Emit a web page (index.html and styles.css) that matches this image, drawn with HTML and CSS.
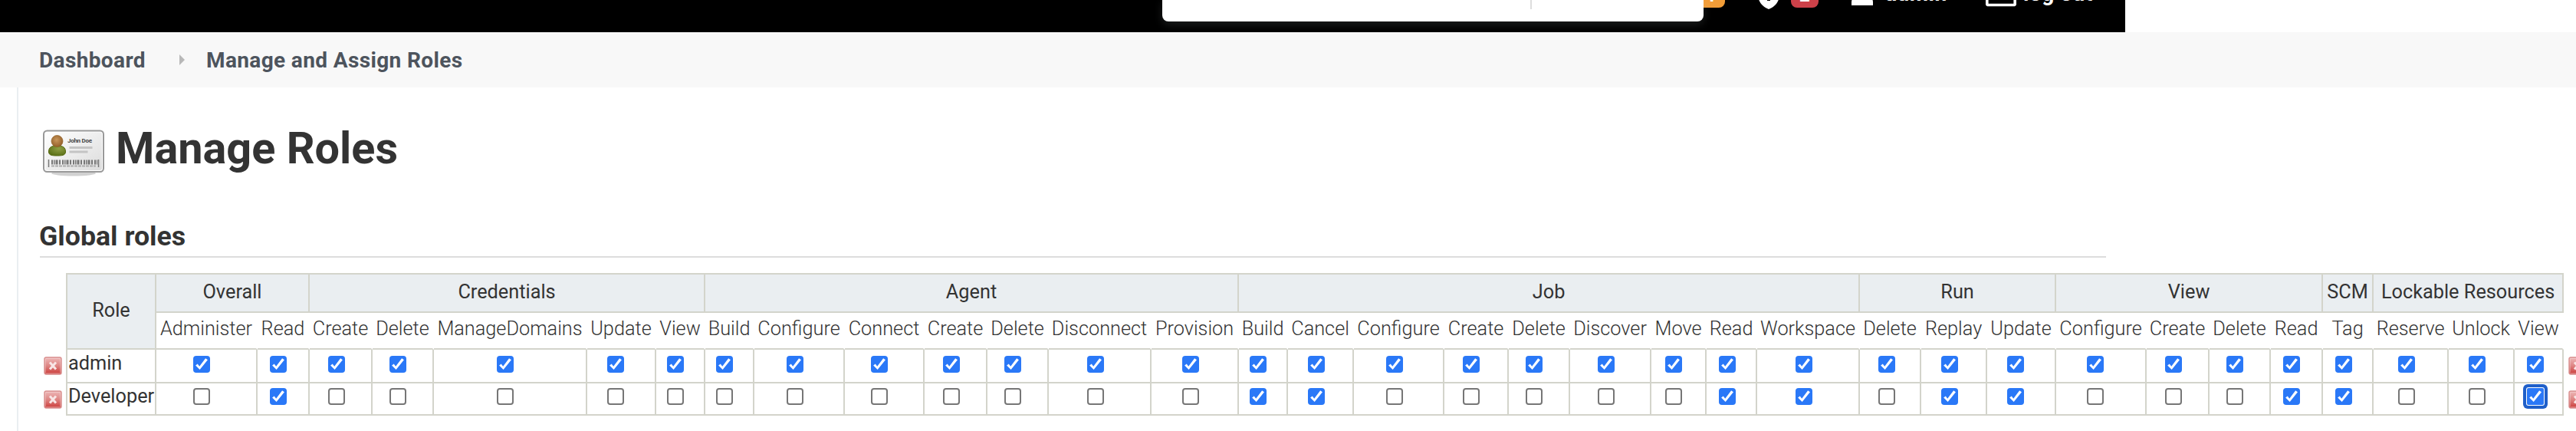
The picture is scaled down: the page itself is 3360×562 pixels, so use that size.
FILE: index.html
```html
<!DOCTYPE html>
<html lang="en">
<head>
<meta charset="utf-8">
<title>Manage Roles</title>
<link rel="stylesheet" href="styles.css">
</head>
<body>
<svg class="defs" width="0" height="0">
  <defs>
    <linearGradient id="red" x1="0" y1="0" x2="0" y2="1"><stop offset="0" stop-color="#eeb9b9"/><stop offset=".5" stop-color="#de8583"/><stop offset="1" stop-color="#cb3a38"/></linearGradient>
    <symbol id="remove" viewBox="0 0 24 24">
      <rect x="1" y="1" width="22" height="22" rx="2" fill="url(#red)" stroke="#d98f8e" stroke-width="1.4"/>
      <rect x="2.4" y="2.4" width="19.2" height="19.2" rx="1" fill="none" stroke="#fff" stroke-opacity=".3"/>
      <path d="M8 7.500l8 9M16 7.500l-8 9" stroke="#f8e6e6" stroke-width="3"/>
    </symbol>
  </defs>
</svg>
<header class="top">
  <div class="search"><i></i></div>
  <span class="badge orange">1</span>
  <svg class="shield" width="28" height="36" viewBox="0 0 28 36"><path d="M14 0L28 6V17C28 26 22 33 14 36C6 33 0 26 0 17V6Z" fill="#fff"/><path d="M14 12v13" stroke="#000" stroke-width="4"/></svg>
  <span class="badge red">2</span>
  <svg class="person" width="28" height="28" viewBox="0 0 28 28"><circle cx="14" cy="7" r="7" fill="#fff"/><path d="M0 28V24C0 17 6 14 14 14S28 17 28 24V28Z" fill="#fff"/></svg>
  <b class="user">admin</b>
  <svg class="exit" width="40" height="36" viewBox="0 0 40 36"><rect x="1.750" y="2" width="36.500" height="30.500" rx="2" fill="none" stroke="#fff" stroke-width="3.700"/></svg>
  <b class="logout">log out</b>
</header>
<nav class="crumbs">
  <a class="home">Dashboard</a>
  <svg width="7" height="14" viewBox="0 0 7 14"><path d="M0 0L7 7L0 14Z" fill="#b8b8b8"/></svg>
  <a>Manage and Assign Roles</a>
</nav>
<main class="main">
  <h1>
    <svg width="84" height="64" viewBox="0 0 84 64">
      <defs>
        <linearGradient id="card" x1="0" y1="0" x2="1" y2="1"><stop offset="0" stop-color="#fff"/><stop offset="1" stop-color="#dcdcdc"/></linearGradient>
        <radialGradient id="head" cx=".45" cy=".4" r=".6"><stop offset="0" stop-color="#c8965a"/><stop offset="1" stop-color="#95602a"/></radialGradient>
        <radialGradient id="coat" cx=".6" cy=".3" r=".7"><stop offset="0" stop-color="#909f45"/><stop offset="1" stop-color="#5c7218"/></radialGradient>
      </defs>
      <ellipse cx="42" cy="57" rx="29" ry="3.500" fill="#000" opacity=".18"/>
      <rect x="3" y="1.500" width="78" height="53.500" rx="4.500" fill="#fff" stroke="#999" stroke-width="2"/>
      <rect x="5" y="3.500" width="74" height="49.500" rx="3" fill="url(#card)"/>
      <path d="M9.500 29C9.500 23 13 21 20.500 21S31.500 23 31.500 29C31.500 33.500 27 34 20.500 34S9.500 33.500 9.500 29Z" fill="url(#coat)" stroke="#56690f"/>
      <circle cx="20.500" cy="15" r="7.500" fill="url(#head)" stroke="#8f5f22" stroke-width=".7"/>
      <text x="34" y="16.500" class="card-name" textLength="32">John Doe</text>
      <path d="M36.500 23.500H66.500M36.500 29H60.500" stroke="#c4c4c4" stroke-width="3"/>
      <path d="M9.500 39V49M74.500 39V49" stroke="#777" stroke-width="1.500"/>
      <path d="M13 42.500H73" stroke="#777" stroke-width="6" stroke-dasharray="2 1 1.500 1 3 1.500 2 2"/>
      <path d="M13 47.500H71" stroke="#aaa" stroke-width="1.800" stroke-dasharray="4 1"/>
    </svg>
    <span>Manage Roles</span>
  </h1>
  <h2><span>Global roles</span></h2>
  <table class="roles">
    <colgroup>
      <col style="width:34px"><col style="width:118px"><col style="width:132px"><col style="width:68px">
      <col style="width:82px"><col style="width:80px"><col style="width:200px"><col style="width:90px"><col style="width:64px">
      <col style="width:64px"><col style="width:118px"><col style="width:104px"><col style="width:82px"><col style="width:80px"><col style="width:134px"><col style="width:114px">
      <col style="width:64px"><col style="width:86px"><col style="width:118px"><col style="width:84px"><col style="width:80px"><col style="width:106px"><col style="width:72px"><col style="width:66px"><col style="width:134px">
      <col style="width:80px"><col style="width:86px"><col style="width:90px">
      <col style="width:118px"><col style="width:82px"><col style="width:80px"><col style="width:68px">
      <col style="width:66px">
      <col style="width:98px"><col style="width:86px"><col style="width:64px"><col style="width:36px">
    </colgroup>
    <tr class="groups">
      <td class="bare" rowspan="2"></td><th class="role" rowspan="2">Role</th><th colspan="2">Overall</th><th colspan="5">Credentials</th><th colspan="7">Agent</th><th colspan="9">Job</th><th colspan="3">Run</th><th colspan="4">View</th><th>SCM</th><th colspan="3">Lockable Resources</th><td class="bare" rowspan="2"></td>
    </tr>
    <tr class="perms">
      <td>Administer</td><td>Read</td>
      <td>Create</td><td>Delete</td><td>ManageDomains</td><td>Update</td><td>View</td>
      <td>Build</td><td>Configure</td><td>Connect</td><td>Create</td><td>Delete</td><td>Disconnect</td><td>Provision</td>
      <td>Build</td><td>Cancel</td><td>Configure</td><td>Create</td><td>Delete</td><td>Discover</td><td>Move</td><td>Read</td><td>Workspace</td>
      <td>Delete</td><td>Replay</td><td>Update</td>
      <td>Configure</td><td>Create</td><td>Delete</td><td>Read</td>
      <td>Tag</td>
      <td>Reserve</td><td>Unlock</td><td>View</td>
    </tr>
    <tr class="grants first">
      <td class="bare"><svg width="24" height="24"><use href="#remove"/></svg></td><td class="name">admin</td>
      <td><input type="checkbox" checked></td><td><input type="checkbox" checked></td>
      <td><input type="checkbox" checked></td><td><input type="checkbox" checked></td><td><input type="checkbox" checked></td><td><input type="checkbox" checked></td><td><input type="checkbox" checked></td>
      <td><input type="checkbox" checked></td><td><input type="checkbox" checked></td><td><input type="checkbox" checked></td><td><input type="checkbox" checked></td><td><input type="checkbox" checked></td><td><input type="checkbox" checked></td><td><input type="checkbox" checked></td>
      <td><input type="checkbox" checked></td><td><input type="checkbox" checked></td><td><input type="checkbox" checked></td><td><input type="checkbox" checked></td><td><input type="checkbox" checked></td><td><input type="checkbox" checked></td><td><input type="checkbox" checked></td><td><input type="checkbox" checked></td><td><input type="checkbox" checked></td>
      <td><input type="checkbox" checked></td><td><input type="checkbox" checked></td><td><input type="checkbox" checked></td>
      <td><input type="checkbox" checked></td><td><input type="checkbox" checked></td><td><input type="checkbox" checked></td><td><input type="checkbox" checked></td>
      <td><input type="checkbox" checked></td>
      <td><input type="checkbox" checked></td><td><input type="checkbox" checked></td><td><input type="checkbox" checked></td>
      <td class="bare end"><svg width="24" height="24"><use href="#remove"/></svg></td>
    </tr>
    <tr class="grants second">
      <td class="bare"><svg width="24" height="24"><use href="#remove"/></svg></td><td class="name">Developer</td>
      <td><input type="checkbox"></td><td><input type="checkbox" checked></td>
      <td><input type="checkbox"></td><td><input type="checkbox"></td><td><input type="checkbox"></td><td><input type="checkbox"></td><td><input type="checkbox"></td>
      <td><input type="checkbox"></td><td><input type="checkbox"></td><td><input type="checkbox"></td><td><input type="checkbox"></td><td><input type="checkbox"></td><td><input type="checkbox"></td><td><input type="checkbox"></td>
      <td><input type="checkbox" checked></td><td><input type="checkbox" checked></td><td><input type="checkbox"></td><td><input type="checkbox"></td><td><input type="checkbox"></td><td><input type="checkbox"></td><td><input type="checkbox"></td><td><input type="checkbox" checked></td><td><input type="checkbox" checked></td>
      <td><input type="checkbox"></td><td><input type="checkbox" checked></td><td><input type="checkbox" checked></td>
      <td><input type="checkbox"></td><td><input type="checkbox"></td><td><input type="checkbox"></td><td><input type="checkbox" checked></td>
      <td><input type="checkbox" checked></td>
      <td><input type="checkbox"></td><td><input type="checkbox"></td><td><input type="checkbox" class="focused" checked></td>
      <td class="bare end"><svg width="24" height="24"><use href="#remove"/></svg></td>
    </tr>
  </table>
</main>
</body>
</html>
```
FILE: styles.css
```css
* { box-sizing: border-box; }
html { height: 562px; overflow: hidden; }
body { margin: 0; height: 562px; overflow: hidden; background: #fff; color: #333; font-family: Roboto, sans-serif; }
.defs { position: absolute; }

.top { display: flex; align-items: flex-start; width: 2772px; height: 42px; padding-left: 1516px; background: #000; color: #fff; overflow: hidden; }
.search { width: 706px; height: 28px; flex: none; background: #fff; border-radius: 0 0 8px 8px; padding-left: 480px; box-shadow: 0 4px 12px rgba(200, 215, 210, .14); z-index: 1; }
.search i { display: block; width: 2px; height: 12px; background: #ddd; }
.badge { flex: none; width: 36px; height: 32px; margin-top: -22px; border-radius: 8px; font-size: 24px; line-height: 32px; font-weight: 700; text-align: center; }
.orange { background: #f29d38; margin-left: -8px; }
.red { background: #cc4149; margin-left: 15px; }
.shield { flex: none; margin: -24px 0 0 43px; }
.person { flex: none; margin: -21px 0 0 43px; }
.user, .logout { flex: none; font-size: 28px; letter-spacing: .5px; line-height: 30px; margin-top: -23px; }
.user { width: 131px; margin-left: 16px; }
.exit { flex: none; margin-top: -26px; }
.logout { margin-left: 9px; white-space: nowrap; }

.crumbs { display: flex; align-items: center; height: 72px; padding-left: 51px; background: #f8f8f8; color: #4d545d; font-size: 28px; font-weight: 700; letter-spacing: .37px; }
.crumbs .home { width: 183px; }
.crumbs svg { margin-right: 28px; }

.main { height: 448px; margin-left: 22px; padding-left: 28px; border-left: 2px solid #eaeef1; }
h1 { display: flex; align-items: flex-start; height: 150px; margin: 0; padding-top: 55px; font-size: 57.600px; line-height: 50px; }
h1 svg { margin: 0 13px 0 2px; }
.card-name { font: 700 8px Roboto, sans-serif; fill: #444; }
h2 { width: 2695px; height: 72px; margin: 0 0 20px 0; padding-top: 26px; border-bottom: 2px solid #ddd; font-size: 35.700px; line-height: 36px; }
h2 span { margin-left: -1px; }

.roles { table-layout: fixed; width: 3326px; border-collapse: separate; border-spacing: 0; font-size: 25.300px; white-space: nowrap; }
.roles td, .roles th { padding: 0; border: 0 solid #d3d4cb; border-width: 0 2px 2px 0; text-align: center; vertical-align: top; }
.roles .bare { border: 0; }
.roles th { background: #eaeef1; border-top-width: 2px; font-weight: 400; line-height: 46px; height: 52px; }
.roles .role { border-left: 2px solid #d3d4cb; line-height: 94px; }
.roles .perms td { height: 48px; line-height: 41px; font-weight: 300; border-right-color: transparent; }
.roles .name { border-left: 2px solid #d3d4cb; text-align: left; padding-left: 1px; line-height: 36px; }
.roles .first td { height: 44px; }
.roles .second td { height: 42px; }
.roles .second .name { line-height: 34px; }
.roles .grants .bare { padding: 9px 0 0 5px; text-align: left; }
.roles .grants .end { padding-left: 6px; }
.grants svg { display: block; }

input { appearance: none; display: block; width: 22px; height: 22px; margin: 8px auto 0; border: 2px solid #767676; border-radius: 4px; background: #fff; transform: translateX(-6px); }
.second input { margin-top: 6px; }
input:checked { border: 0; background: #2a78f7; }
input:checked::after { content: ""; display: block; width: 22px; height: 22px; background: #fff; clip-path: polygon(14% 57%, 26% 48%, 37% 63%, 73% 15%, 86% 24%, 39% 82%); }
.grants td:nth-child(26) input, .grants td:nth-child(36) input { transform: translateX(-4px); }
.grants td:is(:nth-child(5), :nth-child(11), :nth-child(13), :nth-child(15), :nth-child(16), :nth-child(18), :nth-child(19), :nth-child(22), :nth-child(24), :nth-child(25), :nth-child(27), :nth-child(30), :nth-child(33), :nth-child(34), :nth-child(35)) input { transform: translateX(-5px); }
.grants td:is(:nth-child(8), :nth-child(28), :nth-child(29)) input { transform: translateX(-7px); }
input.focused { box-shadow: 0 0 0 1px #fff, 0 0 0 5px #1f5fc9; border-radius: 2px; }
```
